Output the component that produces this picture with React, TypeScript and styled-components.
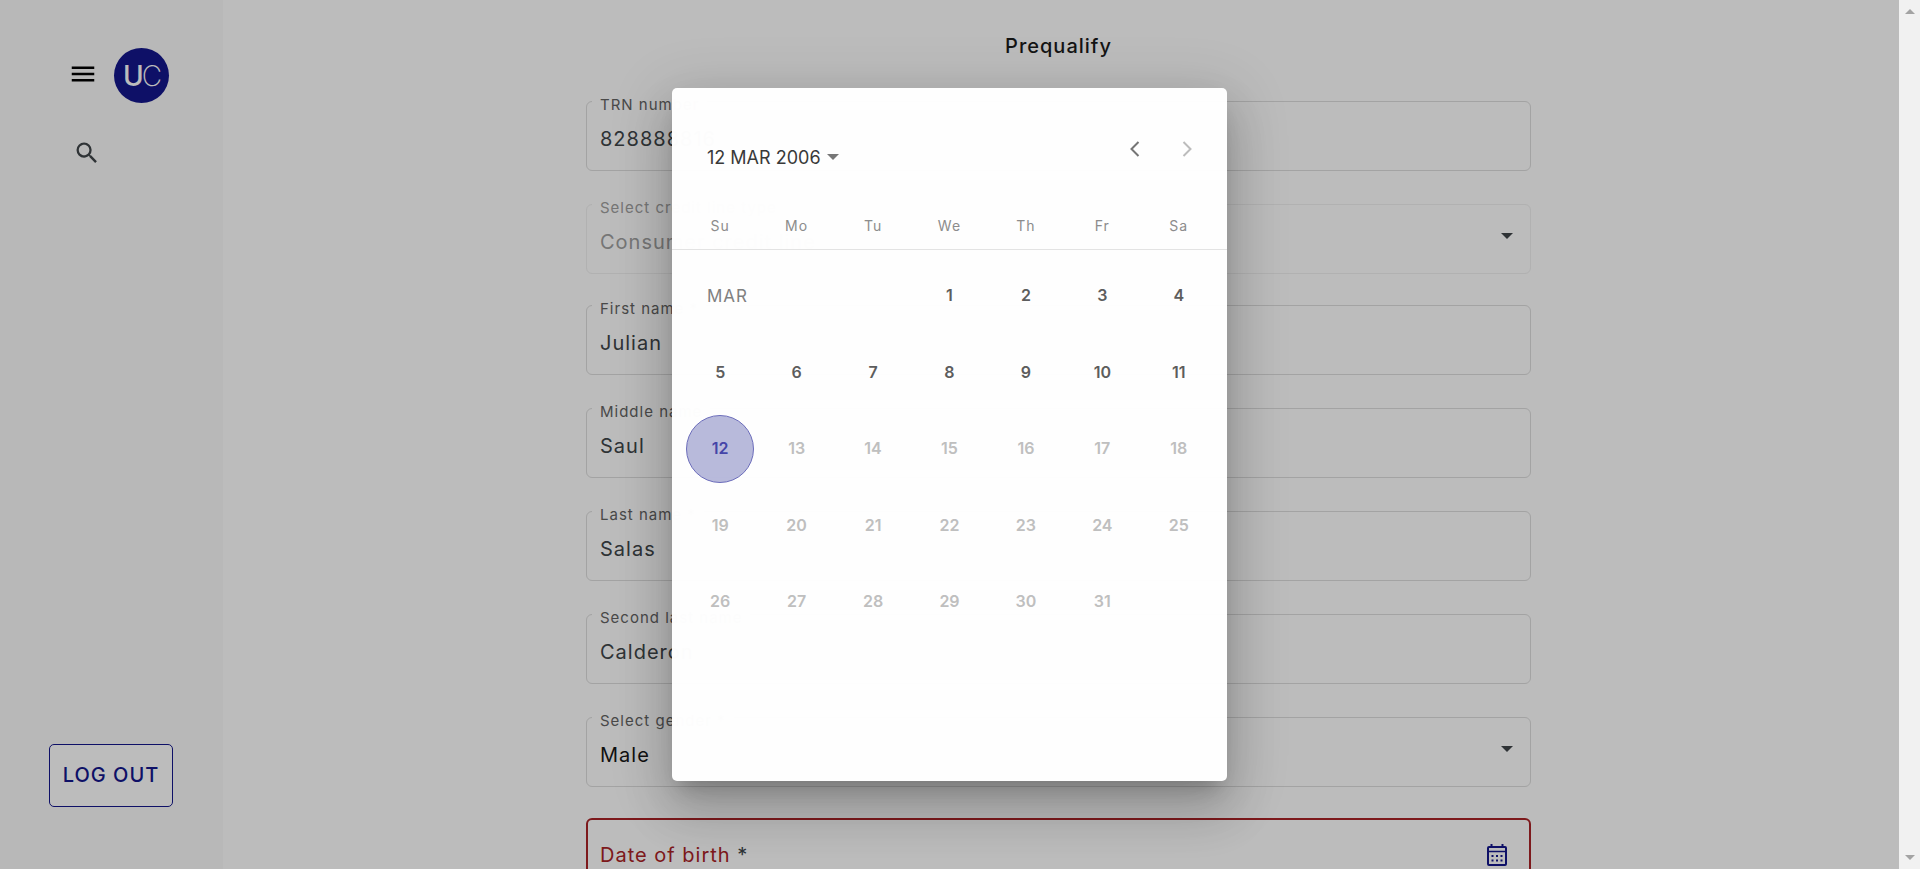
import React from "react";
import styled, { createGlobalStyle, css } from "styled-components";
import { MdMenu, MdSearch } from "react-icons/md";

const navy = "#14178c";
const danger = "#aa2326";

const GlobalStyle = createGlobalStyle`
  *, *::before, *::after { box-sizing: border-box; }
  body {
    margin: 0;
    overflow: hidden;
    font-family: Inter, "Liberation Sans", sans-serif;
    font-size: 20px;
    background: #fff;
  }
  button, input, select { font: inherit; letter-spacing: inherit; color: inherit; }
  button { cursor: pointer; }
`;

const Shell = styled.div`
  display: flex;
  height: 100vh;
  overflow: hidden;
`;

const Viewport = styled.div`
  position: relative;
  display: flex;
  flex: 1;
  min-width: 0;
  overflow: hidden;
`;

const Sidebar = styled.aside`
  display: flex;
  flex: 0 0 223px;
  flex-direction: column;
  justify-content: space-between;
  padding: 48px 50px 62px 49px;
  background: #fafafa;
`;

const Brand = styled.div`
  display: flex;
  align-items: center;
  gap: 16px;
  padding-left: 19px;
`;

const IconButton = styled.button`
  display: flex;
  padding: 0;
  border: 0;
  background: none;
  color: #000;
`;

const MenuButton = styled(IconButton)`
  padding-bottom: 3px;
`;

const SearchButton = styled(IconButton)`
  margin: 36px 0 0 24px;
  color: #40464a;
`;

const Logo = styled.div`
  display: flex;
  flex: 0 0 55px;
  align-items: center;
  justify-content: center;
  height: 55px;
  padding: 2px 0 0 2px;
  border-radius: 50%;
  background: ${navy};
  color: #fff;
  font-size: 28px;
  line-height: 53px;
`;

const LogoBold = styled.span`
  font-weight: 500;
`;

const LogoThin = styled.span`
  margin-left: -2px;
  font-weight: 200;
`;

const LogoutButton = styled.button`
  height: 63px;
  padding: 0 0 1px;
  border: 1px solid ${navy};
  border-radius: 5px;
  background: #fff;
  color: ${navy};
  font-weight: 500;
  letter-spacing: 1px;
  white-space: nowrap;
`;

const Main = styled.main`
  display: flex;
  flex: 1;
  flex-direction: column;
  align-items: center;
  min-width: 0;
  padding: 34px 5px 0 0;
  letter-spacing: 1px;
`;

const Title = styled.h1`
  margin: 0 0 43px;
  color: #1c1c1c;
  font-size: 20px;
  font-weight: 500;
  line-height: 24px;
`;

const Form = styled.form`
  width: 100%;
  max-width: 945px;
`;

const Field = styled.div<{ $gap?: number; $disabled?: boolean; $error?: boolean }>`
  position: relative;
  display: flex;
  align-items: center;
  height: 70px;
  margin-bottom: ${(p) => p.$gap ?? 33}px;
  border: 1px solid #ddd;
  border-radius: 6px;
  color: #40464a;
  ${(p) => p.$disabled && css`border-color: #f0f0f0; color: #a0a0a0;`}
  ${(p) => p.$error && css`border: 2px solid ${danger}; color: ${danger};`}
`;

const FloatingLabel = styled.label<{ $disabled?: boolean }>`
  position: absolute;
  top: -6px;
  left: 5px;
  padding: 0 8px;
  background: #fff;
  color: ${(p) => (p.$disabled ? "#a0a0a0" : "#646464")};
  font-size: 15px;
  line-height: 18px;
`;

const control = css`
  width: 100%;
  height: 68px;
  padding: 6px 13px 0;
  border: 0;
  outline: 0;
  background: transparent;
`;

const TextInput = styled.input`
  ${control}
`;

const Select = styled.select<{ $dark?: boolean }>`
  ${control}
  appearance: none;
  opacity: 1;
  color: ${(p) => (p.$dark ? "#181818" : "inherit")};
`;

const Caret = styled.span`
  flex: none;
  margin: 0 17px 6px 0;
  border: 6px solid transparent;
  border-top-color: #40464a;
  border-bottom: 0;
`;

const DateLabel = styled.label`
  flex: none;
  padding: 4px 0 0 12px;
`;

const Required = styled.span`
  color: #40464a;
`;

const DateInput = styled.input`
  ${control}
  flex: 1;
  min-width: 0;
`;

const CalendarButton = styled(IconButton)`
  margin: 4px 22px 0 0;
  color: ${navy};
`;

const Scrollbar = styled.div`
  display: flex;
  flex: 0 0 21px;
  flex-direction: column;
  align-items: center;
  justify-content: space-between;
  padding: 9px 0 9px;
  background: #f1f1f1;
`;

const ScrollArrow = styled.span<{ $up?: boolean }>`
  border: 5px solid transparent;
  ${(p) =>
    p.$up
      ? css`border-top: 0; border-bottom-color: #a3a3a3;`
      : css`border-bottom: 0; border-top-color: #a3a3a3;`}
`;

const Backdrop = styled.div`
  position: absolute;
  inset: 0;
  display: flex;
  align-items: center;
  justify-content: center;
  background: rgba(0, 0, 0, 0.263);
`;

const Dialog = styled.div`
  width: 555px;
  height: 693px;
  border-radius: 5px;
  background: #fff;
  opacity: 0.99;
  box-shadow:
    0 14px 19px -9px rgba(0, 0, 0, 0.2),
    0 30px 48px 4px rgba(0, 0, 0, 0.14),
    0 11px 58px 10px rgba(0, 0, 0, 0.12);
`;

const CalendarHeader = styled.header`
  display: flex;
  align-items: flex-start;
  padding: 35px 14px 28px 25px;
`;

const PeriodButton = styled.button`
  display: flex;
  align-items: center;
  gap: 6px;
  height: 36px;
  margin: 16px auto 0 0;
  padding: 0 10px;
  border: 0;
  background: none;
  color: #383838;
  font-size: 18px;
`;

const PeriodCaret = styled.span`
  border: 6px solid transparent;
  border-top-color: #777;
  border-bottom: 0;
`;

const StepButton = styled.button`
  display: flex;
  align-items: center;
  justify-content: center;
  width: 52px;
  height: 52px;
  padding: 0;
  border: 0;
  background: none;
  color: #757575;
  &:disabled { color: #bdbdbd; }
`;

const CalendarBody = styled.div`
  padding: 0 10px;
`;

const Month = styled.table`
  width: 100%;
  border-collapse: collapse;
  table-layout: fixed;
`;

const Weekday = styled.th`
  height: 46px;
  padding: 0 0 2px;
  color: #8c8c8c;
  font-size: 14px;
  font-weight: 400;
  letter-spacing: 1px;
`;

const Divider = styled.th`
  position: relative;
  height: 9px;
  padding: 0;
  &::after {
    content: "";
    position: absolute;
    top: 0;
    right: -10px;
    left: -10px;
    height: 1px;
    background: #e4e4e4;
  }
`;

const MonthLabel = styled.td`
  padding: 0 0 0 25px;
  color: #808080;
  font-size: 17px;
  font-weight: 400;
  letter-spacing: 1px;
`;

const DayCell = styled.td`
  padding: 4px;
`;

const Day = styled.button<{ $selected?: boolean }>`
  display: block;
  width: 100%;
  aspect-ratio: 1;
  padding: 0 0 2px;
  border: 1px solid transparent;
  border-radius: 50%;
  background: transparent;
  color: #5c5c5c;
  font-size: 16px;
  font-weight: 600;
  &:disabled { color: #c0c0c0; }
  ${(p) => p.$selected && css`border-color: #6c6dbc; background: #b8badc; color: #4444a8;`}
`;

const WEEKDAYS = ["Su", "Mo", "Tu", "We", "Th", "Fr", "Sa"];
const SELECTED = 12;
const LAST_DAY = 31;
const WEEKS = [[1, 2, 3, 4], ...[5, 12, 19, 26].map((start) =>
  Array.from({ length: Math.min(7, LAST_DAY - start + 1) }, (_, i) => start + i),
)];

function TextField({ id, label, value }: { id: string; label: string; value: string }) {
  return (
    <Field>
      <FloatingLabel htmlFor={id}>{label}</FloatingLabel>
      <TextInput id={id} defaultValue={value} />
    </Field>
  );
}

function SelectField({ id, label, value, disabled }: { id: string; label: string; value: string; disabled?: boolean }) {
  return (
    <Field $gap={31} $disabled={disabled}>
      <FloatingLabel htmlFor={id} $disabled={disabled}>{label}</FloatingLabel>
      <Select id={id} disabled={disabled} $dark={!disabled}>
        <option>{value}</option>
      </Select>
      <Caret />
    </Field>
  );
}

function Chevron({ d }: { d: string }) {
  return (
    <svg width="10" height="16" viewBox="0 0 10 16" fill="none" stroke="currentColor" strokeWidth="2" aria-hidden="true">
      <path d={d} />
    </svg>
  );
}

function CalendarIcon() {
  return (
    <svg width="20" height="22" viewBox="0 0 20 22" fill="none" stroke="currentColor" strokeWidth="2" aria-hidden="true">
      <rect x="1" y="3" width="18" height="18" rx="1" />
      <path d="M4.5 0v3M15.5 0v3" />
      <path d="M1 7.5h18" strokeWidth="1.5" />
      <path d="M4.5 12h2M9 12h2M13.5 12h2M4.5 16.5h2M9 16.5h2M13.5 16.5h2" />
    </svg>
  );
}

function DatePicker() {
  return (
    <Dialog role="dialog" aria-label="Choose date of birth">
      <CalendarHeader>
        <PeriodButton type="button">12 MAR 2006<PeriodCaret /></PeriodButton>
        <StepButton type="button" aria-label="Previous month"><Chevron d="M8.5 1 1.5 8l7 7" /></StepButton>
        <StepButton type="button" aria-label="Next month" disabled><Chevron d="m1.5 1 7 7-7 7" /></StepButton>
      </CalendarHeader>
      <CalendarBody>
        <Month>
          <thead>
            <tr>{WEEKDAYS.map((d) => <Weekday key={d} scope="col">{d}</Weekday>)}</tr>
            <tr aria-hidden="true"><Divider colSpan={7} /></tr>
          </thead>
          <tbody>
            {WEEKS.map((week, i) => (
              <tr key={week[0]}>
                {i === 0 && <MonthLabel colSpan={3}>MAR</MonthLabel>}
                {week.map((day) => (
                  <DayCell key={day}>
                    <Day type="button" disabled={day > SELECTED} $selected={day === SELECTED}>{day}</Day>
                  </DayCell>
                ))}
              </tr>
            ))}
          </tbody>
        </Month>
      </CalendarBody>
    </Dialog>
  );
}

export default function App() {
  return (
    <Shell>
      <GlobalStyle />
      <Viewport>
        <Sidebar>
          <div>
            <Brand>
              <MenuButton type="button" aria-label="Menu"><MdMenu size={30} /></MenuButton>
              <Logo><LogoBold>U</LogoBold><LogoThin>C</LogoThin></Logo>
            </Brand>
            <SearchButton type="button" aria-label="Search"><MdSearch size={28} /></SearchButton>
          </div>
          <LogoutButton type="button">LOG OUT</LogoutButton>
        </Sidebar>
        <Main>
          <Title>Prequalify</Title>
          <Form>
            <TextField id="trn" label="TRN number" value="828888816" />
            <SelectField id="credit" label="Select credit line type" value="Consumer credit line" disabled />
            <TextField id="first" label="First name *" value="Julian" />
            <TextField id="middle" label="Middle name" value="Saul" />
            <TextField id="last" label="Last name *" value="Salas" />
            <TextField id="second" label="Second last name" value="Calderon" />
            <SelectField id="gender" label="Select gender *" value="Male" />
            <Field $error>
              <DateLabel htmlFor="birth">Date of birth <Required>*</Required></DateLabel>
              <DateInput id="birth" />
              <CalendarButton type="button" aria-label="Open calendar"><CalendarIcon /></CalendarButton>
            </Field>
          </Form>
        </Main>
        <Backdrop><DatePicker /></Backdrop>
      </Viewport>
      <Scrollbar aria-hidden="true"><ScrollArrow $up /><ScrollArrow /></Scrollbar>
    </Shell>
  );
}
